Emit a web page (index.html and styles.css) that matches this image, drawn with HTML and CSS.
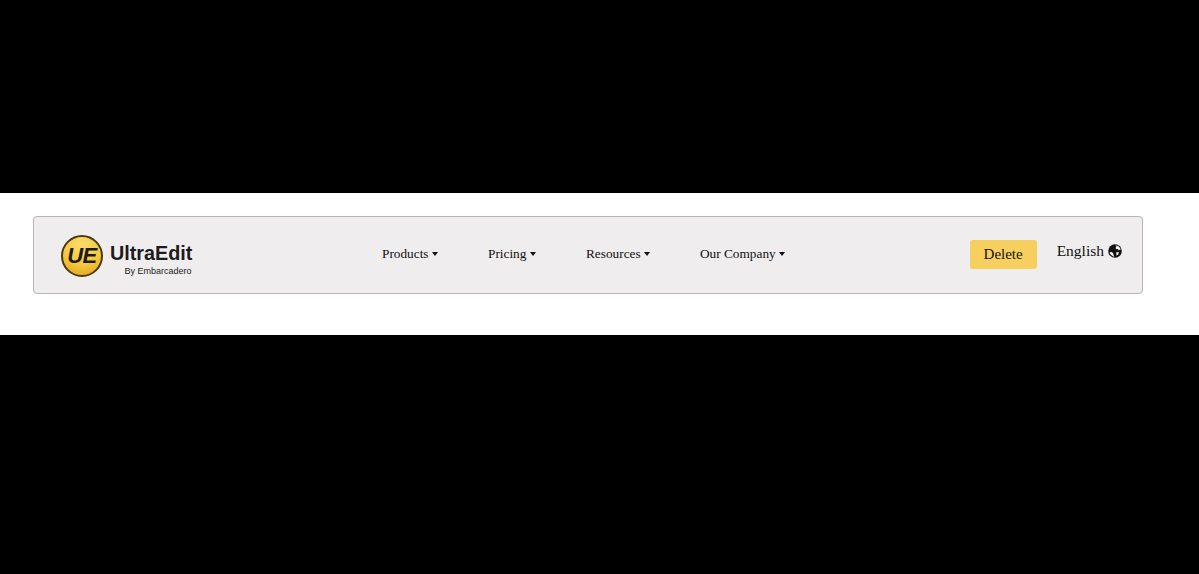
FILE: index.html
```html
<!DOCTYPE html>
<html lang="en">
<head>
  <meta charset="UTF-8">
  <meta name="viewport" content="width=device-width, initial-scale=1.0">
  <title>UltraEdit</title>
  <link rel="stylesheet" href="styles.css">
</head>
<body>
  <div class="band">
    <nav class="navbar">
      <a class="brand" href="#">
        <span class="brand-badge">UE</span>
        <span class="brand-text">
          <span class="brand-name">UltraEdit</span>
          <span class="brand-by">By Embarcadero</span>
        </span>
      </a>
      <ul class="menu">
        <li class="menu-products">Products <span class="caret"></span></li>
        <li class="menu-pricing">Pricing <span class="caret"></span></li>
        <li class="menu-resources">Resources <span class="caret"></span></li>
        <li>Our Company <span class="caret"></span></li>
      </ul>
      <button class="delete-btn">Delete</button>
      <div class="lang">
        English
        <svg class="globe" viewBox="0 0 14 14" width="14" height="14">
          <circle cx="7" cy="7" r="6.8" fill="#111"/>
          <path d="M7.4 1.2c2.6.1 4.8 1.9 5.3 4.4l-1.9.7-.9-1.3-1.6.2-.7-1.5.9-1.1z" fill="#f1f1f1"/>
          <path d="M1.6 8.2l2.1-.2 1.5 1.2.3 1.8.9 1.7c-2.2-.2-4.1-2.1-4.8-4.5z" fill="#f1f1f1"/>
          <path d="M8.3 8.1l2.6.2-.7 2.4-1.9.7z" fill="#e4e4e4"/>
        </svg>
      </div>
    </nav>
  </div>
</body>
</html>
```

FILE: styles.css
```css
body {
  margin: 0;
  height: 574px;
  box-sizing: border-box;
  padding-top: 193px;
  background-color: #000;
  overflow: hidden;
  font-family: "Liberation Serif", serif;
}

.band {
  height: 142px;
  box-sizing: border-box;
  padding: 23px 56px 0 33px;
  background-color: #fff;
}

.navbar {
  height: 78px;
  box-sizing: border-box;
  display: flex;
  align-items: center;
  padding: 0 20px 2px 27px;
  background-color: #efedee;
  border: 1px solid #b8b5b7;
  border-radius: 4px;
}

.brand {
  display: flex;
  align-items: center;
  gap: 7px;
  width: 321px;
  margin-top: 2px;
  flex-shrink: 0;
  color: #1c1c1c;
  text-decoration: none;
  font-family: "Liberation Sans", sans-serif;
}

.brand-badge {
  width: 38px;
  height: 38px;
  margin-top: 1px;
  flex-shrink: 0;
  display: flex;
  align-items: center;
  justify-content: center;
  border: 2px solid #4a3c12;
  border-radius: 50%;
  background: radial-gradient(circle at 50% 20%, #fbdc72 0%, #f6c83f 55%, #dca01c 100%);
  font-size: 22px;
  font-weight: 700;
  font-style: italic;
  letter-spacing: -0.5px;
  color: #1d1a10;
}

.brand-text {
  display: flex;
  flex-direction: column;
  align-items: flex-end;
  margin-top: 9px;
}

.brand-name {
  font-size: 19.8px;
  font-weight: 700;
  line-height: 22px;
}

.brand-by {
  font-size: 9px;
  line-height: 12px;
  margin-top: 1px;
  margin-right: 1px;
}

.menu {
  display: flex;
  margin: 0;
  padding: 0;
  list-style: none;
  font-size: 13.3px;
  color: #111;
  flex: 1;
}

.menu li {
  white-space: nowrap;
}

.menu-products {
  width: 106px;
}

.menu-pricing {
  width: 98px;
}

.menu-resources {
  width: 114px;
}

.caret {
  display: inline-block;
  vertical-align: 2px;
  border-left: 3px solid transparent;
  border-right: 3px solid transparent;
  border-top: 4px solid #111;
}

.delete-btn {
  width: 67px;
  height: 29px;
  padding: 0;
  border: none;
  border-radius: 3px;
  background-color: #f6cf5f;
  color: #111;
  font-family: inherit;
  font-size: 15px;
}

.lang {
  display: flex;
  align-items: center;
  gap: 4px;
  margin-left: 20px;
  margin-bottom: 6px;
  font-size: 15.5px;
  color: #111;
}
```
